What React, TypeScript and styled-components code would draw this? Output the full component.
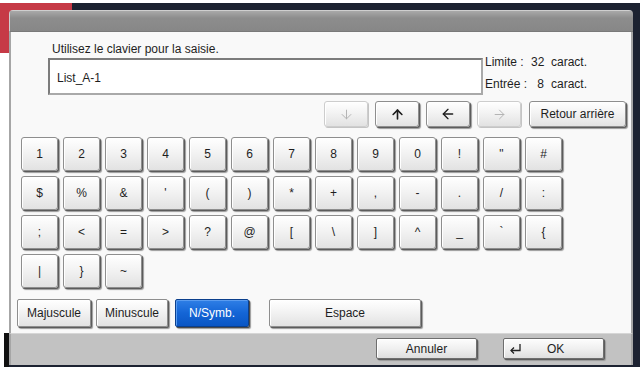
import React from "react";
import styled, { createGlobalStyle, css } from "styled-components";
import { ArrowDown, ArrowUp, ArrowLeft, ArrowRight } from "lucide-react";

const GlobalStyle = createGlobalStyle`
  html, body {
    margin: 0;
    padding: 0;
    background: #fff;
  }
  body {
    font-family: "Liberation Sans", Arial, sans-serif;
    color: #1e1e1e;
  }
`;

const Screen = styled.div`
  width: 640px;
  height: 371px;
  padding-top: 3px;
  box-sizing: border-box;
  overflow: hidden;
  background: #fff;
`;

const Stage = styled.div`
  height: 364px;
  box-sizing: border-box;
  padding: 7px 6px 0 9px;
  background:
    linear-gradient(#c63a46, #c63a46) 0 0 / 72px 50px no-repeat,
    linear-gradient(#111, #111) 4px 330px / 5px 40px no-repeat,
    linear-gradient(#fff, #fff) 0 50px / 9px 100% no-repeat,
    #1c2231;
`;

const Panel = styled.div`
  width: 624px;
  height: 355px;
  display: flex;
  flex-direction: column;
  border-radius: 4px 4px 0 0;
  overflow: hidden;
`;

const TitleBar = styled.div`
  flex: none;
  height: 22px;
  box-sizing: border-box;
  background: linear-gradient(#a9a9a9, #8d8d8d 35%, #878787);
  border-top: 1px solid #cfcfcf;
  border-left: 1px solid #cfcfcf;
  border-bottom: 1px solid #7a7a7a;
`;

const Body = styled.div`
  flex: 1;
  display: flex;
  flex-direction: column;
  background: #f9f9f9;
  border-left: 2px solid #a6a6a6;
  border-right: 2px solid #a6a6a6;
`;

const Prompt = styled.div`
  margin: 10px 0 0 41px;
  height: 14px;
  line-height: 14px;
  font-size: 12px;
`;

const InputRow = styled.div`
  display: flex;
  align-items: flex-start;
  margin-top: 2px;
  padding-left: 37px;
  height: 37px;
`;

const Field = styled.div`
  width: 435px;
  height: 37px;
  box-sizing: border-box;
  display: flex;
  align-items: center;
  padding: 3px 0 0 7px;
  background: #fff;
  border: 2px solid;
  border-color: #7c7c7c #a9a9a9 #a9a9a9 #7c7c7c;
  font-size: 12px;
`;

const Info = styled.div`
  margin: -7px 0 0 2px;
  font-size: 12px;
  line-height: 22px;
`;

const InfoLine = styled.div`
  display: flex;
  white-space: nowrap;
`;

const InfoLabel = styled.span`
  width: 46px;
`;

const InfoNum = styled.span`
  width: 13px;
  text-align: right;
  margin-right: 7px;
`;

const ArrowRow = styled.div`
  display: flex;
  justify-content: flex-end;
  gap: 7px;
  margin-top: 6px;
  padding-right: 5px;
  height: 26px;
`;

const raised = css`
  box-sizing: border-box;
  display: flex;
  align-items: center;
  justify-content: center;
  font-family: "Liberation Sans", Arial, sans-serif;
  font-size: 12px;
  color: #1e1e1e;
  background: linear-gradient(#ffffff, #f3f3f3 45%, #e2e2e2);
  border: 1px solid #8e8e8e;
  border-radius: 3px;
  box-shadow: inset 1px 1px 0 #fff, 1px 1px 0 #5c5c5c, 2px 2px 1px #9a9a9a;
  padding: 0;
`;

const NavButton = styled.button<{ $off?: boolean; $wide?: boolean }>`
  ${raised};
  width: ${(p) => (p.$wide ? "97px" : "44px")};
  height: 26px;
  margin-left: ${(p) => (p.$wide ? "1px" : "0")};
  ${(p) =>
    p.$off &&
    css`
      border-color: #cdcdcd;
      box-shadow: inset 1px 1px 0 #fff, 1px 1px 0 #c4c4c4;
      color: #b4b4b4;
    `}
`;

const KeyGrid = styled.div`
  display: grid;
  grid-template-columns: repeat(13, 37px);
  grid-auto-rows: 34px;
  column-gap: 5px;
  row-gap: 5px;
  margin-top: 10px;
  padding-left: 10px;
`;

const Key = styled.button`
  ${raised};
`;

const ModeRow = styled.div`
  display: flex;
  margin-top: 11px;
  padding-left: 6px;
  height: 28px;
`;

const ModeButton = styled.button<{ $w: number; $gap: number; $active?: boolean }>`
  ${raised};
  width: ${(p) => p.$w}px;
  height: 28px;
  margin-right: ${(p) => p.$gap}px;
  border-radius: 2px;
  ${(p) =>
    p.$active &&
    css`
      color: #fff;
      background: linear-gradient(#2f7fe6, #1465d6 50%, #0a56c4);
      border-color: #0b3f8c;
      box-shadow: inset 1px 1px 0 #5a9cf0, 1px 1px 0 #4a4a4a, 2px 2px 1px #9a9a9a;
    `}
`;

const Footer = styled.div`
  flex: none;
  height: 32px;
  box-sizing: border-box;
  display: flex;
  justify-content: flex-end;
  align-items: flex-start;
  gap: 26px;
  padding: 4px 27px 0 0;
  background: #c2c2c2;
  border-left: 2px solid #a6a6a6;
  border-right: 2px solid #a6a6a6;
  border-top: 1px solid #d6d6d6;
`;

const FooterButton = styled.button<{ $icon?: boolean }>`
  ${raised};
  width: 101px;
  height: 21px;
  border-radius: 2px;
  border-color: #6e6e6e;
  background: linear-gradient(#fdfdfd, #f0f0f0 50%, #dedede);
  ${(p) =>
    p.$icon &&
    css`
      justify-content: flex-start;
      padding-left: 5px;
      gap: 25px;
    `}
`;

const keys = [
  "1", "2", "3", "4", "5", "6", "7", "8", "9", "0", "!", '"', "#",
  "$", "%", "&", "'", "(", ")", "*", "+", ",", "-", ".", "/", ":",
  ";", "<", "=", ">", "?", "@", "[", "\\", "]", "^", "_", "`", "{",
  "|", "}", "~",
];

function ReturnIcon() {
  return (
    <svg width="13" height="11" viewBox="0 0 13 11" fill="none">
      <path d="M11 1 V7.5 H2" stroke="#222" strokeWidth="1.3" />
      <path d="M5 4.5 L2 7.5 L5 10.5" stroke="#222" strokeWidth="1.3" />
    </svg>
  );
}

export default function App() {
  return (
    <Screen>
      <GlobalStyle />
      <Stage>
        <Panel>
          <TitleBar />
          <Body>
            <Prompt>Utilisez le clavier pour la saisie.</Prompt>
            <InputRow>
              <Field>List_A-1</Field>
              <Info>
                <InfoLine>
                  <InfoLabel>Limite :</InfoLabel>
                  <InfoNum>32</InfoNum>
                  <span>caract.</span>
                </InfoLine>
                <InfoLine>
                  <InfoLabel>Entrée :</InfoLabel>
                  <InfoNum>8</InfoNum>
                  <span>caract.</span>
                </InfoLine>
              </Info>
            </InputRow>
            <ArrowRow>
              <NavButton $off>
                <ArrowDown size={15} strokeWidth={1.6} />
              </NavButton>
              <NavButton>
                <ArrowUp size={15} strokeWidth={2.6} />
              </NavButton>
              <NavButton>
                <ArrowLeft size={16} strokeWidth={2} />
              </NavButton>
              <NavButton $off>
                <ArrowRight size={15} strokeWidth={1.6} />
              </NavButton>
              <NavButton $wide>Retour arrière</NavButton>
            </ArrowRow>
            <KeyGrid>
              {keys.map((k, i) => (
                <Key key={i}>{k}</Key>
              ))}
            </KeyGrid>
            <ModeRow>
              <ModeButton $w={74} $gap={5}>Majuscule</ModeButton>
              <ModeButton $w={72} $gap={7}>Minuscule</ModeButton>
              <ModeButton $w={74} $gap={20} $active>N/Symb.</ModeButton>
              <ModeButton $w={152} $gap={0}>Espace</ModeButton>
            </ModeRow>
          </Body>
          <Footer>
            <FooterButton>Annuler</FooterButton>
            <FooterButton $icon>
              <ReturnIcon />
              OK
            </FooterButton>
          </Footer>
        </Panel>
      </Stage>
    </Screen>
  );
}
